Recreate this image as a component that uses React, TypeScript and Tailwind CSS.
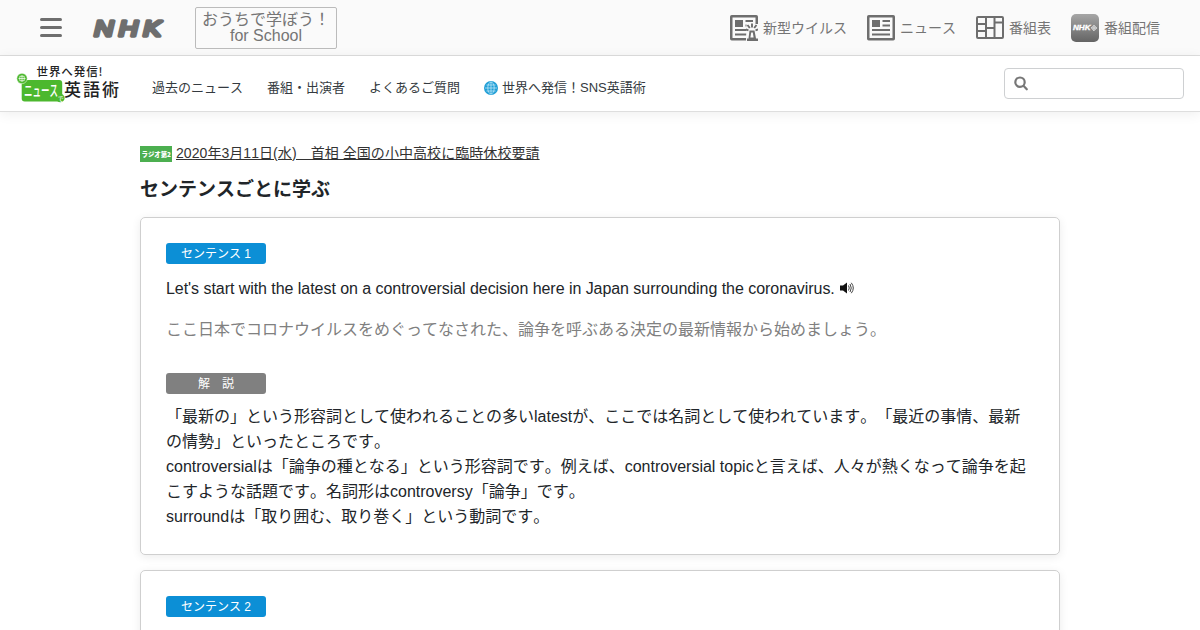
import type { ReactNode } from 'react';

const navItems = ['過去のニュース', '番組・出演者', 'よくあるご質問'];

const sentences = [
  {
    no: 1,
    en: "Let's start with the latest on a controversial decision here in Japan surrounding the coronavirus.",
    ja: 'ここ日本でコロナウイルスをめぐってなされた、論争を呼ぶある決定の最新情報から始めましょう。',
    notes: [
      '「最新の」という形容詞として使われることの多いlatestが、ここでは名詞として使われています。「最近の事情、最新の情勢」といったところです。',
      'controversialは「論争の種となる」という形容詞です。例えば、controversial topicと言えば、人々が熱くなって論争を起こすような話題です。名詞形はcontroversy「論争」です。',
      'surroundは「取り囲む、取り巻く」という動詞です。',
    ],
  },
  { no: 2, en: '', ja: '', notes: [] },
];

function NewsIcon({ alert = false }: { alert?: boolean }) {
  return (
    <svg width="28" height="26" viewBox="0 0 28 26" fill="#6e6e6e">
      <rect x="1.25" y="1.25" width="25.5" height="23" fill="none" stroke="#6e6e6e" strokeWidth="2.5" rx="0.5" />
      <path d="M5 5h8v7H5zM15.500 5h7.500v2h-7.500zM15.500 9.500h7.500v2h-7.500zM5 14h18v2H5zM5 18.500h18v2H5z" />
      {alert && (
        <>
          <path d="M16.500 9H28v17H16z" fill="#fafafa" />
          <path d="M19.500 15.500h5l1.500 8h2V26H17v-2.500h1.500z" />
          <path d="M21.200 17.500h1.600l.8 5h-3.200z" fill="#fafafa" />
          <path d="M22 8.500v4M17.500 10l2.300 3M26.500 10l-2.300 3M16 14.500l2.500.8M28 14.500l-2.500.8" stroke="#6e6e6e" strokeWidth="1.900" />
        </>
      )}
    </svg>
  );
}

function GridIcon() {
  return (
    <svg width="28" height="23" viewBox="0 0 28 23" fill="none" stroke="#6e6e6e" strokeWidth="2">
      <rect x="1" y="1" width="26" height="21" rx="1" />
      <path d="M10 1v21M18.500 1v21M1 8h9M1 15h9M10 12h8.500M18.500 6.500H27" />
    </svg>
  );
}

function AppIcon() {
  return (
    <svg width="28" height="28" viewBox="0 0 28 28">
      <defs>
        <linearGradient id="app" x1="0" y1="0" x2="0" y2="1">
          <stop offset="0" stopColor="#a6a6a6" />
          <stop offset="1" stopColor="#646464" />
        </linearGradient>
      </defs>
      <rect width="28" height="28" rx="5" fill="url(#app)" />
      <text x="2" y="16.300" fill="#fff" stroke="#fff" strokeWidth=".3" fontSize="6.500" fontWeight="700" fontStyle="italic" textLength="17.500" lengthAdjust="spacingAndGlyphs" fontFamily="Liberation Sans, sans-serif">NHK</text>
      <path d="M23 11.500v5M20.500 14h5M23 11.300l2.700 2.700-2.700 2.700-2.700-2.700z" fill="none" stroke="#fff" strokeWidth=".7" />
    </svg>
  );
}

function NhkLogo() {
  return (
    <svg className="ml-[30px] overflow-visible" width="73" height="22" viewBox="0 0 73 22">
      <text x="1" y="19" dx="0 4.6 4.6" fill="#6e6e6e" stroke="#6e6e6e" strokeWidth="3.600" strokeLinejoin="round"
        fontSize="22.500" fontStyle="italic" fontFamily="Liberation Sans, sans-serif" transform="translate(1 0) scale(1.18 1)">NHK</text>
    </svg>
  );
}

function ProgramLogo() {
  return (
    <svg width="104" height="40" viewBox="0 0 104 40" fontFamily="Noto Sans CJK JP, sans-serif">
      <text x="20.500" y="11.500" fontSize="11.500" fontWeight="500" textLength="66" fill="#222">世界へ発信!</text>
      <rect x="5.700" y="16" width="40.500" height="21.500" rx="3" fill="#4cb82e" />
      <circle cx="44.300" cy="34" r="4.300" fill="#4cb82e" />
      <circle cx="6" cy="14.500" r="5.200" fill="#4cb82e" stroke="#fff" strokeWidth=".5" />
      <path d="M6 11v7M2.500 14.500h7M3.800 12.300h4.400v4.400H3.800z" fill="none" stroke="#fff" strokeWidth=".7" />
      <text x="8" y="32" fontSize="15" fontWeight="500" textLength="34" lengthAdjust="spacingAndGlyphs" fill="#fff">ニュース</text>
      <text x="42" y="36.500" fontSize="5.500" fontWeight="500" fill="#fff">で</text>
      <text x="48" y="32" fontSize="17" fontWeight="500" textLength="55" fill="#222">英語術</text>
    </svg>
  );
}

function GlobeIcon() {
  return (
    <svg width="14" height="14" viewBox="0 0 14 14" fill="none" stroke="#b9e4f7" strokeWidth=".8">
      <circle cx="7" cy="7" r="7" fill="#219fd6" stroke="none" />
      <ellipse cx="7" cy="7" rx="3.200" ry="6" />
      <path d="M7 1v12M1 7h12M2.500 4h9M2.500 10h9" />
    </svg>
  );
}

function SpeakerIcon() {
  return (
    <svg className="ml-[5px] inline-block align-[0px]" width="14" height="12" viewBox="0 0 14 12">
      <path d="M0 3.500h3L7 .5v11L3 8.500H0z" fill="#111" />
      <path d="M8.500 3.500q1.500 2.500 0 5M10 2q2.500 4 0 8M11.300.8q4 5.200 0 10.400" fill="none" stroke="#444" strokeWidth="1" />
    </svg>
  );
}

function Label({ children, color }: { children: ReactNode; color: string }) {
  return <div className={`h-[21px] w-[100px] rounded-[3px] pt-px text-center text-xs leading-5 text-white ${color}`}>{children}</div>;
}

export default function App() {
  return (
    <div className="h-[630px] overflow-hidden bg-white font-['Liberation_Sans','Noto_Sans_CJK_JP',sans-serif] text-[#212529] [font-kerning:none] [text-spacing-trim:space-all]">
      {/* NHK common header */}
      <header className="flex h-14 items-center border-b border-[#dedede] bg-[#fafafa] px-10 text-[#757575]">
        <div className="flex w-[22px] flex-col gap-[5px]">
          <span className="h-[3px] rounded-full bg-[#6e6e6e]" />
          <span className="h-[3px] rounded-full bg-[#6e6e6e]" />
          <span className="h-[3px] rounded-full bg-[#6e6e6e]" />
        </div>
        <NhkLogo />
        <a className="ml-[30px] flex h-[42px] w-[142px] flex-col justify-center rounded-[2px] border border-[#bbb] text-center text-base leading-4 whitespace-nowrap">
          <span>おうちで学ぼう！</span>
          <span>for School</span>
        </a>
        <nav className="ml-auto flex items-center gap-5 text-sm">
          <a className="flex items-center gap-[5px]"><NewsIcon alert />新型ウイルス</a>
          <a className="flex items-center gap-[5px]"><NewsIcon />ニュース</a>
          <a className="flex items-center gap-[5px]"><GridIcon />番組表</a>
          <a className="flex items-center gap-[5px]"><AppIcon />番組配信</a>
        </nav>
      </header>

      {/* Program navigation */}
      <div className="flex h-14 items-center border-b border-[#dedede] bg-white px-4 shadow-[0_2px_12px_rgba(0,0,0,0.07)]">
        <ProgramLogo />
        <nav className="mt-2 ml-8 flex gap-6 text-[13px] leading-5 text-[#343a40]">
          {navItems.map((item) => <a key={item}>{item}</a>)}
          <a className="flex items-center gap-1"><GlobeIcon />世界へ発信！SNS英語術</a>
        </nav>
        <div className="ml-auto flex h-[31px] w-[180px] items-center rounded-[4px] border border-[#ced0d2] pl-[9px]">
          <svg width="15" height="15" viewBox="0 0 15 15" fill="none" stroke="#777" strokeWidth="2.200" strokeLinecap="round">
            <circle cx="6" cy="6.200" r="4.700" />
            <path d="M9.700 10l3.100 3.300" />
          </svg>
        </div>
      </div>

      <main className="mx-auto w-[920px] pt-[31px]">
        <div className="flex h-[21px] items-center text-sm">
          <svg className="mr-1 overflow-visible" width="32" height="16" viewBox="0 0 32 16">
            <rect width="32" height="16" fill="#4caf50" />
            <text x="1.500" y="10.600" fontSize="6.400" fontWeight="900" fill="#fff" fontFamily="Noto Sans CJK JP, sans-serif">ラジオ第2</text>
          </svg>
          <a className="mb-0.5 tracking-[0.06px] text-[#333] underline">2020年3月11日(水)　首相 全国の小中高校に臨時休校要請</a>
        </div>
        <h1 className="mt-[13px] mb-[15px] text-[19px] leading-[25px] font-bold">センテンスごとに学ぶ</h1>

        {sentences.map((s) => (
          <section key={s.no} className="mb-[15px] min-h-[338px] rounded-[5px] border border-[#cfcfcf] p-[25px] shadow-[0_2px_10px_rgba(0,0,0,0.08)]">
            <Label color="bg-[#0c8fd6]">センテンス {s.no}</Label>
            {s.en && <p className="mt-3 leading-[25px] tracking-[-0.05px]">{s.en}<SpeakerIcon /></p>}
            {s.ja && <p className="mt-4 leading-[25px] text-[#808080]">{s.ja}</p>}
            {s.notes.length > 0 && (
              <div className="mt-[31px]">
                <Label color="bg-[#808080]">解　説</Label>
                <div className="mt-[10px] leading-[25px]">
                  {s.notes.map((note) => <p key={note}>{note}</p>)}
                </div>
              </div>
            )}
          </section>
        ))}
      </main>
    </div>
  );
}
